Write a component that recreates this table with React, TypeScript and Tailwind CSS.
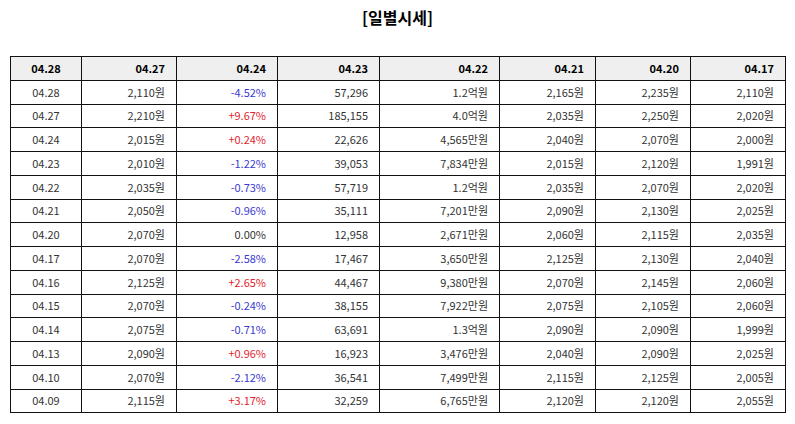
import React from "react";

const header = ["04.28", "04.27", "04.24", "04.23", "04.22", "04.21", "04.20", "04.17"];

const rows: string[][] = [
  ["04.28", "2,110원", "-4.52%", "57,296", "1.2억원", "2,165원", "2,235원", "2,110원"],
  ["04.27", "2,210원", "+9.67%", "185,155", "4.0억원", "2,035원", "2,250원", "2,020원"],
  ["04.24", "2,015원", "+0.24%", "22,626", "4,565만원", "2,040원", "2,070원", "2,000원"],
  ["04.23", "2,010원", "-1.22%", "39,053", "7,834만원", "2,015원", "2,120원", "1,991원"],
  ["04.22", "2,035원", "-0.73%", "57,719", "1.2억원", "2,035원", "2,070원", "2,020원"],
  ["04.21", "2,050원", "-0.96%", "35,111", "7,201만원", "2,090원", "2,130원", "2,025원"],
  ["04.20", "2,070원", "0.00%", "12,958", "2,671만원", "2,060원", "2,115원", "2,035원"],
  ["04.17", "2,070원", "-2.58%", "17,467", "3,650만원", "2,125원", "2,130원", "2,040원"],
  ["04.16", "2,125원", "+2.65%", "44,467", "9,380만원", "2,070원", "2,145원", "2,060원"],
  ["04.15", "2,070원", "-0.24%", "38,155", "7,922만원", "2,075원", "2,105원", "2,060원"],
  ["04.14", "2,075원", "-0.71%", "63,691", "1.3억원", "2,090원", "2,090원", "1,999원"],
  ["04.13", "2,090원", "+0.96%", "16,923", "3,476만원", "2,040원", "2,090원", "2,025원"],
  ["04.10", "2,070원", "-2.12%", "36,541", "7,499만원", "2,115원", "2,125원", "2,005원"],
  ["04.09", "2,115원", "+3.17%", "32,259", "6,765만원", "2,120원", "2,120원", "2,055원"],
];

const widths = ["w-[71px]", "w-[95px]", "w-[101px]", "w-[102px]", "w-[120px]", "w-[96px]", "w-[95px]", "w-[95px]"];

function changeColor(v: string) {
  if (v.startsWith("+")) return "text-[#e3232b]";
  if (v.startsWith("-")) return "text-[#3a3ad0]";
  return "text-[#333333]";
}

export default function App() {
  return (
    <div
      className="w-[795px] h-[424px] bg-white"
      style={{ fontFamily: '"Noto Sans CJK KR", "Noto Sans", sans-serif' }}
    >
      <div className="h-[56px] pt-[6px] flex justify-center">
        <h2 className="text-[16px] leading-[22px] font-bold text-black">[일별시세]</h2>
      </div>
      <div className="pl-[10px]">
        <table className="w-[775px] border-collapse table-fixed text-[11px]">
          <colgroup>
            {widths.map((w, i) => (
              <col key={i} className={w} />
            ))}
          </colgroup>
          <thead>
            <tr className="h-[23.75px] bg-[#efefef]">
              {header.map((h, i) => (
                <th
                  key={i}
                  className={`border border-[#111111] p-0 font-bold text-black leading-none ${
                    i === 0 ? "text-center" : "text-right pr-[11px]"
                  }`}
                >
                  {h}
                </th>
              ))}
            </tr>
          </thead>
          <tbody>
            {rows.map((r, ri) => (
              <tr key={ri} className="h-[23.75px]">
                {r.map((c, ci) => (
                  <td
                    key={ci}
                    className={`border border-[#111111] p-0 leading-none ${
                      ci === 0 ? "text-center" : "text-right pr-[11px]"
                    } ${ci === 2 ? changeColor(c) : "text-[#333333]"}`}
                  >
                    {c}
                  </td>
                ))}
              </tr>
            ))}
          </tbody>
        </table>
      </div>
    </div>
  );
}
